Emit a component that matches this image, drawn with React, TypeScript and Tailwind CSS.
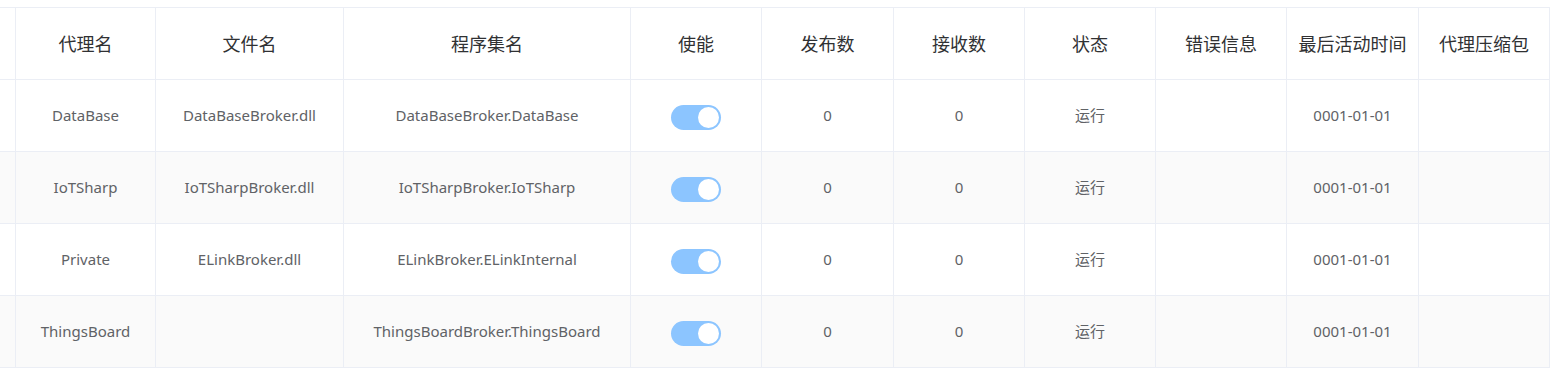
const columns = [
  { key: 'pad', title: '' },
  { key: 'name', title: '代理名' },
  { key: 'file', title: '文件名' },
  { key: 'assembly', title: '程序集名' },
  { key: 'enable', title: '使能' },
  { key: 'published', title: '发布数' },
  { key: 'received', title: '接收数' },
  { key: 'status', title: '状态' },
  { key: 'error', title: '错误信息' },
  { key: 'last', title: '最后活动时间' },
  { key: 'package', title: '代理压缩包' },
]

const brokers = [
  { name: 'DataBase', file: 'DataBaseBroker.dll', assembly: 'DataBaseBroker.DataBase' },
  { name: 'IoTSharp', file: 'IoTSharpBroker.dll', assembly: 'IoTSharpBroker.IoTSharp' },
  { name: 'Private', file: 'ELinkBroker.dll', assembly: 'ELinkBroker.ELinkInternal' },
  { name: 'ThingsBoard', file: '', assembly: 'ThingsBoardBroker.ThingsBoard' },
]

const grid =
  'grid grid-cols-[16px_140px_188px_287px_131px_132px_131px_131px_131px_132px_131px]'

function Switch() {
  return (
    <span className="relative inline-block mt-[3px] w-[50px] h-[25px] rounded-full bg-[#8cc5ff]">
      <span className="absolute right-[2px] top-[2px] w-[21px] h-[21px] rounded-full bg-white" />
    </span>
  )
}

function Cell({ children, className = '' }: { children?: React.ReactNode; className?: string }) {
  return (
    <div className={`flex items-center justify-center border-r border-b border-[#ebeef5] ${className}`}>
      {children}
    </div>
  )
}

export default function App() {
  return (
    <div
      className="w-[1550px] h-[372px] bg-white pt-[7px] overflow-hidden"
      style={{ fontFamily: '"Noto Sans", "Noto Sans CJK SC", sans-serif' }}
    >
      <div className={`${grid} h-[73px] text-[18px] text-[#303133]`}>
        {columns.map((c) => (
          <Cell key={c.key} className="border-t">
            <span style={{ fontFamily: '"Noto Sans CJK SC", sans-serif' }}>{c.title}</span>
          </Cell>
        ))}
      </div>

      {brokers.map((b, i) => (
        <div
          key={b.name}
          className={`${grid} h-[72px] text-[15px] text-[#606266] ${i % 2 === 1 ? 'bg-[#fafafa]' : 'bg-white'}`}
        >
          <Cell />
          <Cell>{b.name}</Cell>
          <Cell>{b.file}</Cell>
          <Cell>{b.assembly}</Cell>
          <Cell>
            <Switch />
          </Cell>
          <Cell>0</Cell>
          <Cell>0</Cell>
          <Cell>
            <span style={{ fontFamily: '"Noto Sans CJK SC", sans-serif' }}>运行</span>
          </Cell>
          <Cell />
          <Cell>0001-01-01</Cell>
          <Cell />
        </div>
      ))}
    </div>
  )
}
